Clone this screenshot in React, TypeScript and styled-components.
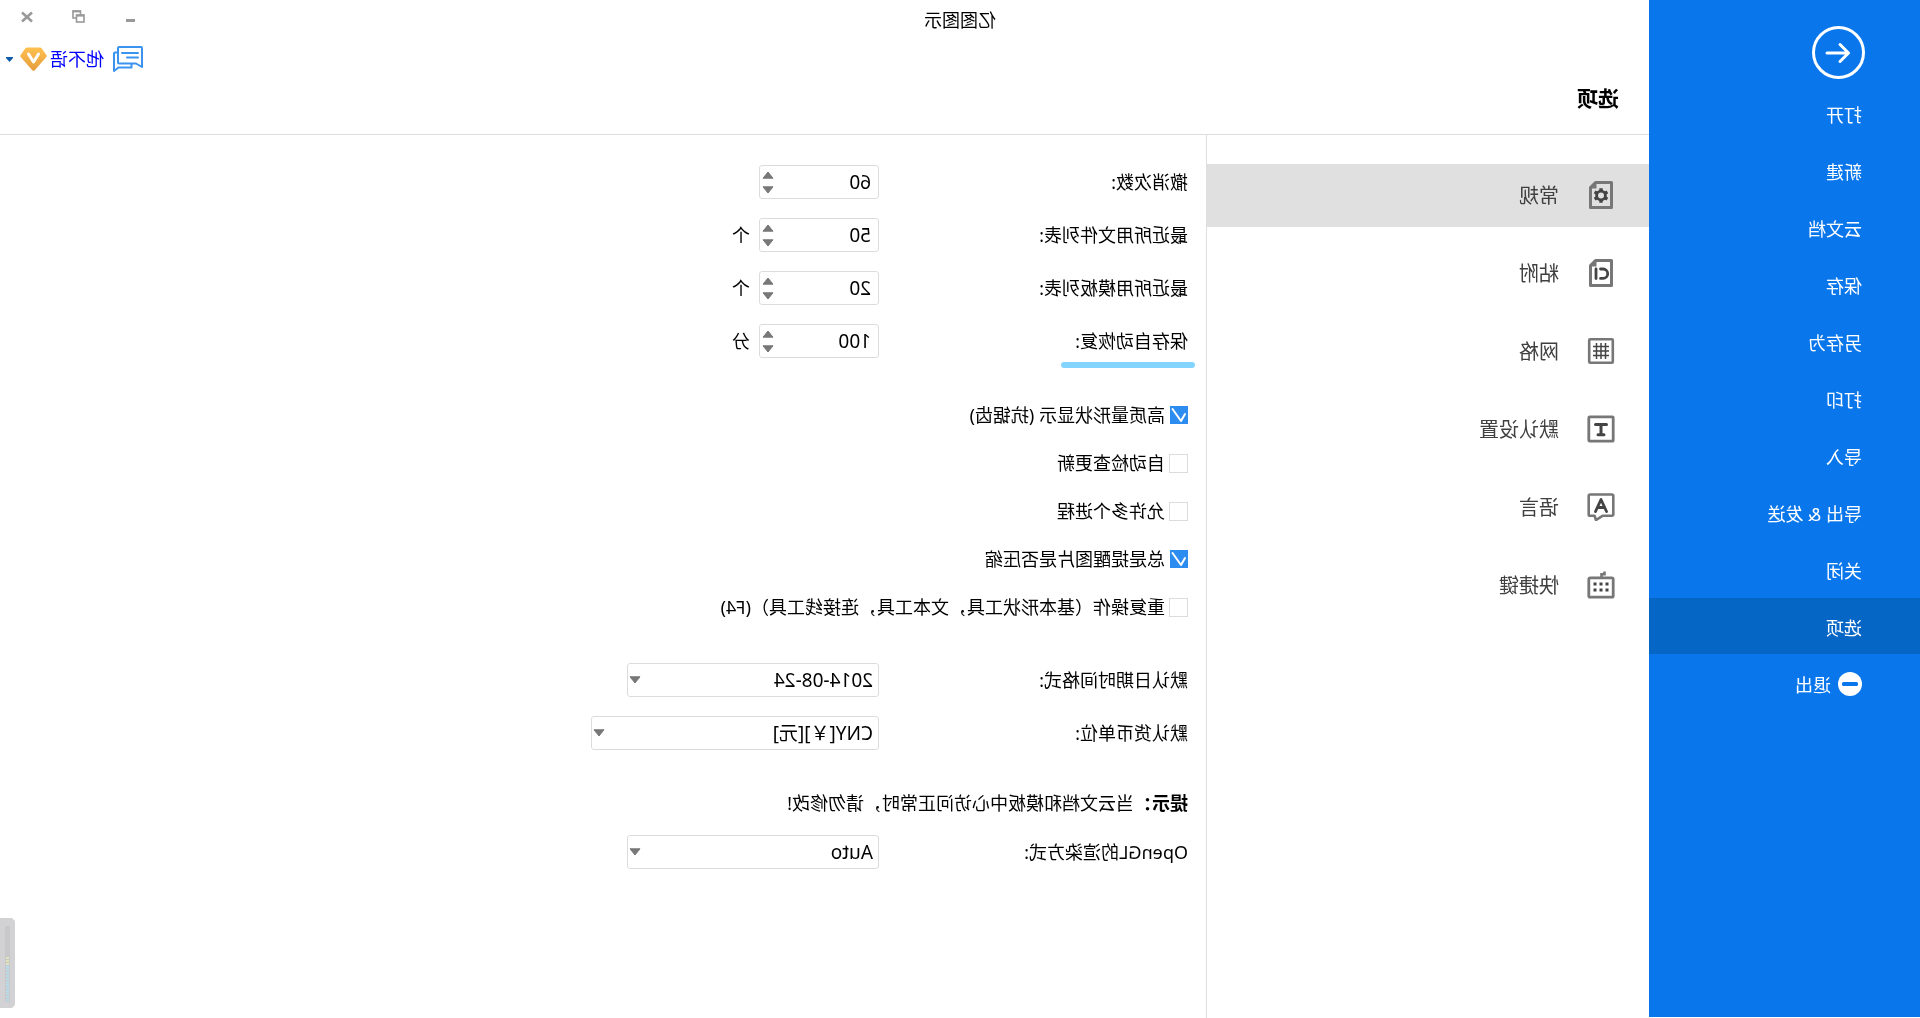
import React, { useState } from "react";
import styled, { createGlobalStyle, css } from "styled-components";

const GlobalStyle = createGlobalStyle`
  *, *::before, *::after { box-sizing: border-box; }
  body {
    margin: 0;
    background: #fff;
    overflow-x: hidden;
  }
  body, button, input, select {
    font-family: "Noto Sans", "Noto Sans CJK SC", sans-serif;
    font-size: 18px;
    color: #000;
  }
`;

/* The whole window is shown flipped left to right. */
const Window = styled.div`
  position: relative;
  display: flex;
  min-height: 100vh;
  line-height: 24px;
  transform: scaleX(-1);
`;

const Sidebar = styled.nav`
  flex: 0 0 271px;
  margin-bottom: 1px;
  background: #0976eb;
`;

const BackButton = styled.button`
  display: block;
  margin: 26px 0 6px 55px;
  padding: 0;
  border: 0;
  background: none;
  line-height: 0;
  cursor: pointer;
`;

const MenuList = styled.ul`
  display: flex;
  flex-direction: column;
  gap: 1px;
  margin: 0;
  padding: 0;
  list-style: none;
`;

const MenuButton = styled.button<{ $active?: boolean }>`
  display: flex;
  align-items: center;
  gap: 7px;
  width: 100%;
  height: 56px;
  padding: 4px 0 0 58px;
  border: 0;
  background: ${(p) => (p.$active ? "#0666c6" : "transparent")};
  color: #fff;
  line-height: 24px;
  cursor: pointer;
  > svg {
    margin-bottom: 2px;
  }
`;

const Main = styled.main`
  flex: 1;
  min-width: 0;
  display: flex;
  flex-direction: column;
`;

const TitleBar = styled.header`
  display: flex;
  height: 40px;
`;

const AppTitle = styled.div`
  flex: 1;
  padding-right: 115px;
  line-height: 40px;
  text-align: center;
`;

const WindowButton = styled.button`
  display: grid;
  place-items: center;
  width: 52px;
  height: 33px;
  padding: 0 2px 0 0;
  border: 0;
  background: none;
  cursor: pointer;
`;

const UserRow = styled.div`
  display: flex;
  align-items: center;
  justify-content: flex-end;
  height: 37px;
  padding-right: 6px;
`;

const IconButton = styled.button`
  padding: 0;
  border: 0;
  background: none;
  line-height: 0;
  cursor: pointer;
`;

const UserLink = styled.a`
  display: flex;
  align-items: center;
  gap: 3px;
  margin: 0 7px 0 9px;
  color: #0000ff;
  text-decoration: none;
`;

const PageTitle = styled.h1`
  margin: 0;
  padding: 7px 30px 22px;
  border-bottom: 1px solid #dedede;
  font-size: 21px;
  line-height: 28px;
  font-weight: 700;
`;

const Body = styled.div`
  flex: 1;
  display: flex;
`;

const Categories = styled.nav`
  flex: 0 0 443px;
  display: flex;
  flex-direction: column;
  gap: 15px;
  padding-top: 29px;
  border-right: 1px solid #dedede;
`;

const CategoryButton = styled.button<{ $active?: boolean }>`
  display: flex;
  align-items: center;
  gap: 28px;
  height: 63px;
  padding: 0 0 0 34px;
  border: 0;
  background: ${(p) => (p.$active ? "#e0e0e0" : "transparent")};
  color: #404040;
  font-size: 20px;
  line-height: 24px;
  cursor: pointer;
  > svg {
    margin-bottom: 2px;
  }
`;

const Form = styled.form`
  flex: 1;
  display: flex;
  flex-direction: column;
  padding: 30px 18px;
`;

const Fields = styled.div`
  display: flex;
  flex-direction: column;
  gap: 19px;
`;

const FieldRow = styled.div`
  display: flex;
  align-items: center;
  height: 34px;
`;

const LabelCell = styled.div`
  flex: 0 0 309px;
`;

const FieldLabel = styled.label<{ $marked?: boolean }>`
  position: relative;
  ${(p) =>
    p.$marked &&
    css`
      &::after {
        content: "";
        position: absolute;
        left: -7px;
        right: -14px;
        bottom: -15px;
        height: 6px;
        border-radius: 3px;
        background: #83d5ff;
      }
    `}
`;

const boxed = css`
  border: 1px solid #dcdcdc;
  border-radius: 3px;
  background: #fff;
`;

const SpinBox = styled.div`
  ${boxed}
  display: flex;
  width: 120px;
  height: 34px;
`;

const SpinInput = styled.input`
  flex: 1;
  min-width: 0;
  padding: 0 0 0 7px;
  border: 0;
  background: none;
  outline: 0;
  font-size: 19px;
  appearance: textfield;
  &::-webkit-inner-spin-button,
  &::-webkit-outer-spin-button {
    appearance: none;
    margin: 0;
  }
`;

const SpinButtons = styled.div`
  display: flex;
  flex-direction: column;
  justify-content: center;
  gap: 1px;
  width: 16px;
`;

const SpinButton = styled.button`
  display: grid;
  place-items: center;
  height: 14px;
  padding: 0;
  border: 0;
  background: none;
`;

const Unit = styled.span`
  margin-left: 9px;
`;

const Checks = styled.div`
  display: flex;
  flex-direction: column;
  gap: 24px;
  margin: 45px 0 44px;
`;

const CheckLabel = styled.label`
  display: flex;
  align-items: center;
  gap: 4px;
  height: 24px;
`;

const CheckWrap = styled.span`
  display: grid;
  width: 19px;
  height: 19px;
  > * {
    grid-area: 1 / 1;
  }
`;

const CheckInput = styled.input`
  appearance: none;
  width: 19px;
  height: 19px;
  margin: 0;
  border: 1px solid #dcdcdc;
  background: #fff;
  &:checked {
    width: 18px;
    height: 18px;
    border-color: #2d8cf0;
    background: #2d8cf0;
  }
`;

const CheckMark = styled.svg`
  pointer-events: none;
`;

const SelectWrap = styled.div<{ $wide?: boolean }>`
  display: grid;
  align-items: center;
  width: ${(p) => (p.$wide ? 288 : 252)}px;
  > * {
    grid-area: 1 / 1;
  }
  > svg {
    justify-self: end;
    margin-right: 2px;
    pointer-events: none;
  }
`;

const SelectBox = styled.select`
  ${boxed}
  appearance: none;
  width: 100%;
  height: 34px;
  padding: 0 24px 0 5px;
  font-size: 19px;
`;

const Hint = styled.p`
  margin: 41px 0 20px;
`;

const Meter = styled.div`
  position: absolute;
  right: 0;
  bottom: 10px;
  line-height: 0;
`;

const Caret = ({ up, color = "#777" }: { up?: boolean; color?: string }) => (
  <svg width="12" height="8" viewBox="0 0 12 8" aria-hidden="true">
    <path
      d={up ? "M6 1 L11 7.2 H1 Z" : "M6 7 L11 0.8 H1 Z"}
      fill={color}
      stroke={color}
      strokeWidth="1"
      strokeLinejoin="round"
    />
  </svg>
);

const PageFrame = () => (
  <>
    <path
      d="M3.5 1.5 H19.5 L24.5 6.5 V26.5 H3.5 Z"
      fill="none"
      stroke="#777"
      strokeWidth="3"
      strokeLinejoin="round"
    />
    <path d="M18.5 1 V7.5 H25 Z" fill="#777" />
  </>
);

const icons: Record<string, React.ReactNode> = {
  general: (
    <>
      <PageFrame />
      <circle cx="14" cy="14.5" r="4.4" fill="none" stroke="#444" strokeWidth="2.8" />
      <g stroke="#444" strokeWidth="3.4">
        <path d="M14 7.2V10M14 19V21.8M7.6 10.9L10 12.3M18 16.7L20.4 18.1M7.6 18.1L10 16.7M18 12.3L20.4 10.9" />
      </g>
    </>
  ),
  attach: (
    <>
      <PageFrame />
      <path
        d="M14.5 10 H12 a4.6 4.6 0 0 0 0 9.4 H14.5"
        fill="none"
        stroke="#444"
        strokeWidth="2.8"
        strokeLinecap="round"
      />
      <path d="M19 10V19.5" stroke="#444" strokeWidth="2.8" strokeLinecap="round" />
    </>
  ),
  grid: (
    <>
      <rect x="2.2" y="2.2" width="23.6" height="23.6" rx="1" fill="none" stroke="#777" strokeWidth="2.6" />
      <path
        d="M9.5 6V22M14 6V22M18.5 6V22M6 9.5H22M6 14H22M6 18.5H22"
        stroke="#444"
        strokeWidth="1.5"
      />
    </>
  ),
  defaults: (
    <>
      <rect x="1.8" y="1.8" width="24.4" height="24.4" rx="1" fill="none" stroke="#777" strokeWidth="2.8" />
      <path d="M8.5 9.5H19.5M14 9.5V19.5M11 19.8H17" stroke="#444" strokeWidth="3" strokeLinecap="round" />
    </>
  ),
  language: (
    <>
      <path
        d="M3 1.5 H25 a1.3 1.3 0 0 1 1.3 1.3 V21.5 a1.3 1.3 0 0 1 -1.3 1.3 H20.5 L19 27 L12.5 22.8 H3 a1.3 1.3 0 0 1 -1.3 -1.3 V2.8 A1.3 1.3 0 0 1 3 1.5 Z"
        fill="none"
        stroke="#777"
        strokeWidth="2.6"
        strokeLinejoin="round"
      />
      <path
        d="M8.5 18.5 L14 6.5 L19.5 18.5 M10.5 14.5 H17.5"
        fill="none"
        stroke="#444"
        strokeWidth="2.8"
        strokeLinecap="round"
        strokeLinejoin="round"
      />
    </>
  ),
  keyboard: (
    <>
      <rect x="1.8" y="6.8" width="24.4" height="19.4" rx="1.5" fill="none" stroke="#777" strokeWidth="2.8" />
      <path d="M13.5 6V3.2H10.5V0.5" fill="none" stroke="#777" strokeWidth="2.6" />
      <g fill="#444">
        {[6.5, 12.5, 18.5].map((x) =>
          [11.5, 17.5].map((y) => <rect key={`${x}-${y}`} x={x} y={y} width="3" height="3" />)
        )}
      </g>
    </>
  ),
};

const menu = ["打开", "新建", "云文档", "保存", "另存为", "打印", "导入", "导出 & 发送", "关闭", "选项"];

const categories = [
  ["general", "常规"],
  ["attach", "粘附"],
  ["grid", "网格"],
  ["defaults", "默认设置"],
  ["language", "语言"],
  ["keyboard", "快捷键"],
];

const numbers = [
  { id: "undo", label: "撤消次数:", value: 60, unit: "" },
  { id: "files", label: "最近所用文件列表:", value: 50, unit: "个" },
  { id: "templates", label: "最近所用模板列表:", value: 20, unit: "个" },
  { id: "autosave", label: "保存自动恢复:", value: 100, unit: "分", marked: true },
];

const checks = [
  { label: "高质量形状显示 (抗锯齿)", on: true },
  { label: "自动检查更新", on: false },
  { label: "允许多个进程", on: false },
  { label: "总是提醒图片是否压缩", on: true },
  { label: "重复操作（基本形状工具，文本工具，连接线工具）(F4)", on: false },
];

type NumberFieldProps = { id: string; label: string; value: number; unit: string; marked?: boolean };

function NumberField({ id, label, value, unit, marked }: NumberFieldProps) {
  const [n, setN] = useState(value);
  return (
    <FieldRow>
      <LabelCell>
        <FieldLabel htmlFor={id} $marked={marked}>{label}</FieldLabel>
      </LabelCell>
      <SpinBox>
        <SpinInput id={id} type="number" value={n} onChange={(e) => setN(Number(e.target.value))} />
        <SpinButtons>
          <SpinButton type="button" aria-label="+" onClick={() => setN(n + 1)}>
            <Caret up />
          </SpinButton>
          <SpinButton type="button" aria-label="-" onClick={() => setN(n - 1)}>
            <Caret />
          </SpinButton>
        </SpinButtons>
      </SpinBox>
      {unit && <Unit>{unit}</Unit>}
    </FieldRow>
  );
}

type SelectFieldProps = { id: string; label: string; value: string; wide?: boolean };

function SelectField({ id, label, value, wide }: SelectFieldProps) {
  return (
    <FieldRow>
      <LabelCell>
        <FieldLabel htmlFor={id}>{label}</FieldLabel>
      </LabelCell>
      <SelectWrap $wide={wide}>
        <SelectBox id={id}>
          <option>{value}</option>
        </SelectBox>
        <Caret />
      </SelectWrap>
    </FieldRow>
  );
}

export default function App() {
  return (
    <>
      <GlobalStyle />
      <Window>
        <Sidebar>
          <BackButton type="button" aria-label="返回">
            <svg width="53" height="53" viewBox="0 0 53 53" fill="none" stroke="#fff" strokeWidth="3">
              <circle cx="26.5" cy="26.5" r="25" />
              <path
                d="M38 27H16.5M25 18.5L16.5 27L25 35.5"
                strokeLinecap="round"
                strokeLinejoin="round"
              />
            </svg>
          </BackButton>
          <MenuList>
            {menu.map((m) => (
              <li key={m}>
                <MenuButton type="button" $active={m === "选项"}>{m}</MenuButton>
              </li>
            ))}
            <li>
              <MenuButton type="button">
                <svg width="24" height="24" viewBox="0 0 24 24" aria-hidden="true">
                  <circle cx="12" cy="12" r="12" fill="#fff" />
                  <rect x="4" y="10" width="16" height="4" rx="1.5" fill="#0976eb" />
                </svg>
                退出
              </MenuButton>
            </li>
          </MenuList>
        </Sidebar>

        <Main>
          <TitleBar>
            <AppTitle>亿图图示</AppTitle>
            <WindowButton type="button" aria-label="最小化">
              <svg width="12" height="12" viewBox="0 0 12 12">
                <rect x="2" y="8" width="9" height="3" fill="#999" />
              </svg>
            </WindowButton>
            <WindowButton type="button" aria-label="还原">
              <svg width="13" height="13" viewBox="0 0 13 13" fill="none" stroke="#999" strokeWidth="1.6">
                <path d="M4.5 4.5V1H12V8H9" />
                <path d="M4 1.4H12.5" strokeWidth="2" />
                <rect x="1" y="5" width="7.5" height="7" fill="#fff" />
                <path d="M1 5.6H8.5" strokeWidth="2" />
              </svg>
            </WindowButton>
            <WindowButton type="button" aria-label="关闭">
              <svg width="12" height="12" viewBox="0 0 12 12" stroke="#999" strokeWidth="2.6">
                <path d="M1 1.5L11 10.5M11 1.5L1 10.5" />
              </svg>
            </WindowButton>
          </TitleBar>
          <UserRow>
            <IconButton type="button" aria-label="消息">
              <svg
                width="30"
                height="26"
                viewBox="0 0 30 26"
                fill="none"
                stroke="#3b93f0"
                strokeWidth="2"
                strokeLinecap="round"
                strokeLinejoin="round"
              >
                <path d="M2 1H24a1 1 0 0 1 1 1V16.5a1 1 0 0 1-1 1H7L1 21V2a1 1 0 0 1 1-1Z" />
                <path d="M5 7H21M5 11.5H16" />
                <path d="M25 6.5H28a1 1 0 0 1 1 1V25L24.5 21.5H11.5V18" />
              </svg>
            </IconButton>
            <UserLink href="#user">
              他不语
              <svg width="27" height="24" viewBox="0 0 27 24" aria-hidden="true">
                <defs>
                  <linearGradient id="gem" x1="0" y1="0" x2="0" y2="1">
                    <stop offset="0" stopColor="#ffc04f" />
                    <stop offset="1" stopColor="#e59d3c" />
                  </linearGradient>
                </defs>
                <path
                  d="M7 0.5H20a2 2 0 0 1 1.6.8L26.4 8a1.6 1.6 0 0 1-.1 2L15 23a2 2 0 0 1-3 0L.7 10a1.6 1.6 0 0 1-.1-2L5.4 1.3A2 2 0 0 1 7 .5Z"
                  fill="url(#gem)"
                />
                <path
                  d="M8.5 7L13.5 15L18.5 7"
                  fill="none"
                  stroke="#fff"
                  strokeWidth="3"
                  strokeLinecap="round"
                  strokeLinejoin="round"
                />
              </svg>
            </UserLink>
            <IconButton type="button" aria-label="账户菜单">
              <svg width="7" height="5" viewBox="0 0 7 5">
                <path d="M0 0H7V1L3.5 5L0 1Z" fill="#0c5cab" />
              </svg>
            </IconButton>
          </UserRow>
          <PageTitle>选项</PageTitle>

          <Body>
            <Categories>
              {categories.map(([id, label]) => (
                <CategoryButton key={id} type="button" $active={id === "general"}>
                  <svg width="28" height="28" viewBox="0 0 28 28" aria-hidden="true">
                    {icons[id]}
                  </svg>
                  {label}
                </CategoryButton>
              ))}
            </Categories>

            <Form>
              <Fields>
                {numbers.map((f) => (
                  <NumberField key={f.id} {...f} />
                ))}
              </Fields>
              <Checks>
                {checks.map((c) => (
                  <CheckLabel key={c.label}>
                    <CheckWrap>
                      <CheckInput type="checkbox" defaultChecked={c.on} />
                      {c.on && (
                        <CheckMark width="19" height="19" viewBox="0 0 19 19" aria-hidden="true">
                          <path
                            d="M3 8L7 15L15.5 3"
                            fill="none"
                            stroke="#fff"
                            strokeWidth="2"
                            strokeLinecap="round"
                            strokeLinejoin="round"
                          />
                        </CheckMark>
                      )}
                    </CheckWrap>
                    {c.label}
                  </CheckLabel>
                ))}
              </Checks>
              <Fields>
                <SelectField id="date" label="默认日期时间格式:" value="2014-08-24" />
                <SelectField id="currency" label="默认货币单位:" value="CNY[￥][元]" wide />
              </Fields>
              <Hint>
                <strong>提示：</strong>当云文档和模板中心访问正常时，请勿修改!
              </Hint>
              <SelectField id="opengl" label="OpenGL的渲染方式:" value="Auto" />
            </Form>
          </Body>
        </Main>

        <Meter>
          <svg width="15" height="90" viewBox="0 0 15 90" aria-hidden="true">
            <path d="M15 0H3L0 3V87L3 90H15Z" fill="#d2d2d4" />
            <rect x="5" y="8" width="5" height="76" fill="#c8c8cb" />
            {Array.from({ length: 15 }, (_, i) => (
              <rect key={i} x="6" y={39 + i * 3} width="3" height="2" fill={i < 3 ? "#e2e2b8" : "#b4dcea"} />
            ))}
          </svg>
        </Meter>
      </Window>
    </>
  );
}
